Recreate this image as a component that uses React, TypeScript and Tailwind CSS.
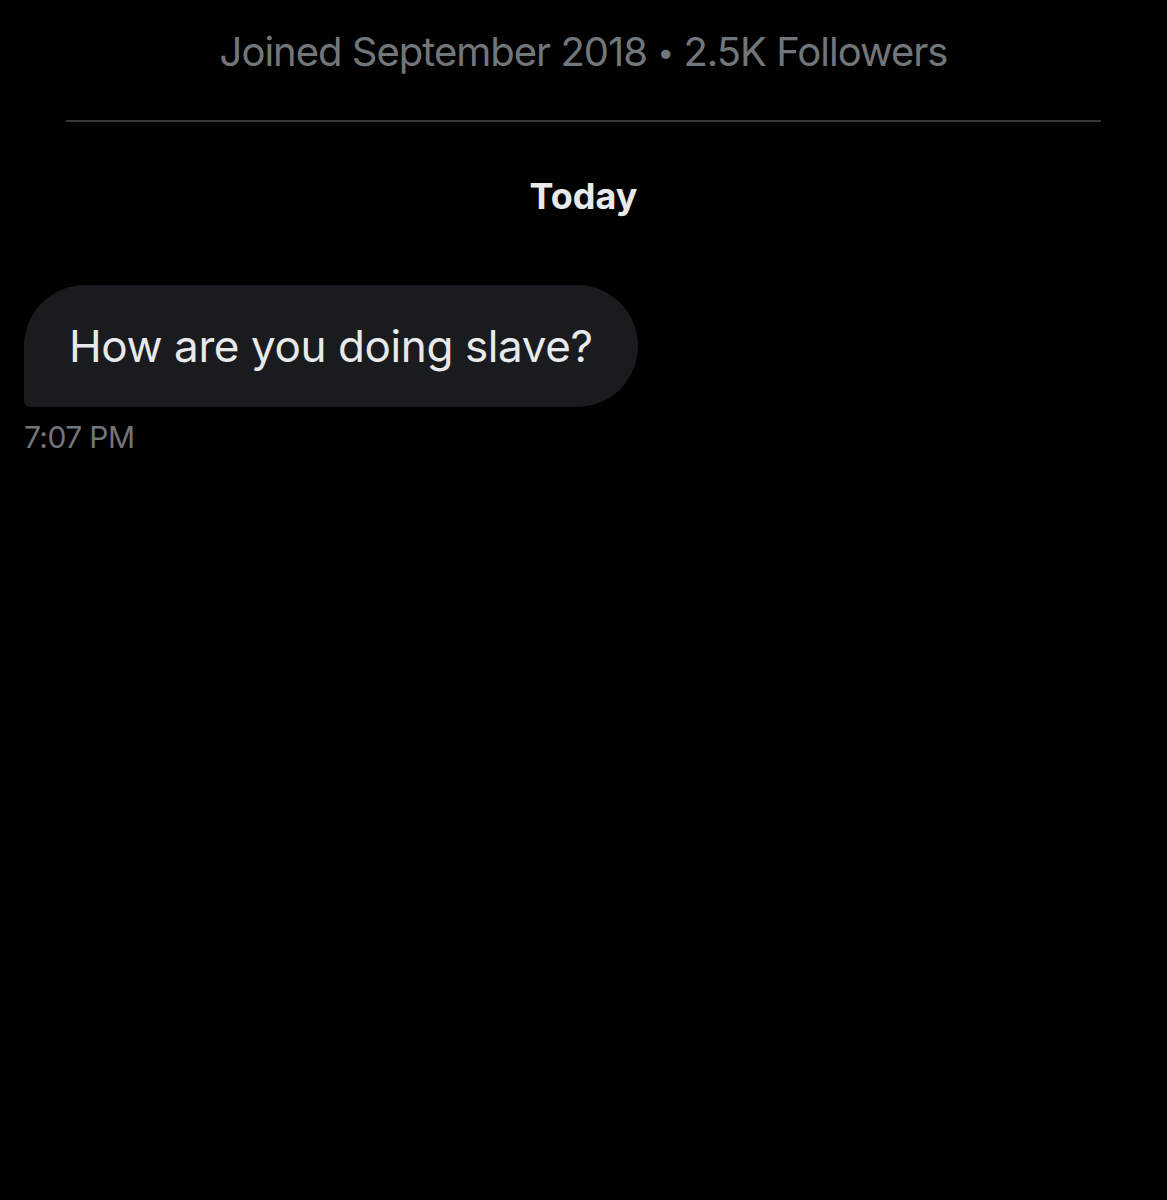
export default function App() {
  return (
    <div className="w-[1167px] h-[1200px] bg-black overflow-hidden" style={{ fontFamily: "Inter, Roboto, sans-serif" }}>
      <div className="pt-[26px] text-center text-[40px] leading-[52px] text-[#71767b] tracking-[-1px]">
        Joined September 2018 <span className="text-[30px] align-[3px]">•</span> 2.5K Followers
      </div>
      <div className="mx-[66px] mt-[42px] h-[2px] bg-[#36373b]" />
      <div className="mt-[52px] text-center text-[36px] leading-[44px] font-bold text-[#e7e9ea]">Today</div>
      <div className="mt-[67px] px-[24px]">
        <div className="inline-flex items-center h-[122px] px-[45px] rounded-[61px] rounded-bl-[6px] bg-[#1a1b1e]">
          <span className="text-[44px] text-[#e7e9ea] tracking-[-0.4px]">How are you doing slave?</span>
        </div>
        <div className="mt-[12px] text-[30px] leading-[36px] text-[#71767b] tracking-[-0.6px]">7:07 PM</div>
      </div>
    </div>
  );
}
